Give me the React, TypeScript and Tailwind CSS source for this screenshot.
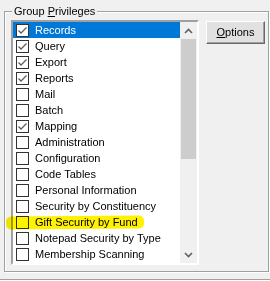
import React from 'react';

const items: { label: string; checked: boolean }[] = [
  { label: 'Records', checked: true },
  { label: 'Query', checked: true },
  { label: 'Export', checked: true },
  { label: 'Reports', checked: true },
  { label: 'Mail', checked: false },
  { label: 'Batch', checked: false },
  { label: 'Mapping', checked: true },
  { label: 'Administration', checked: false },
  { label: 'Configuration', checked: false },
  { label: 'Code Tables', checked: false },
  { label: 'Personal Information', checked: false },
  { label: 'Security by Constituency', checked: false },
  { label: 'Gift Security by Fund', checked: false },
  { label: 'Notepad Security by Type', checked: false },
  { label: 'Membership Scanning', checked: false },
];

const CheckBox = ({ checked }: { checked: boolean }) => (
  <span className="w-[13px] h-[13px] shrink-0 border border-[#333333] bg-white flex items-center justify-center">
    {checked && (
      <svg width="11" height="11" viewBox="0 0 11 11">
        <path d="M1.5 5.5 L4 8 L9.5 2.5" fill="none" stroke="#5f5f5f" strokeWidth="1.3" />
      </svg>
    )}
  </span>
);

const Chevron = ({ up }: { up: boolean }) => (
  <svg width="9" height="6" viewBox="0 0 9 6">
    <path d={up ? 'M1 5 L4.5 1.5 L8 5' : 'M1 1 L4.5 4.5 L8 1'} fill="none" stroke="#606060" strokeWidth="1.6" />
  </svg>
);

export default function App() {
  return (
    <div className="relative w-[270px] h-[281px] bg-[#f0f0f0] overflow-hidden text-[11px] text-black" style={{ fontFamily: '"Liberation Sans", Arial, sans-serif' }}>
      <div className="pt-[11px] pl-[4px]">
        {/* group box */}
        <div className="relative w-[265px] h-[261px] border border-[#a0a0a0] shadow-[inset_1px_1px_0_#fff,1px_1px_0_#fff]">
          <span className="absolute left-[7px] top-[-8px] px-[2px] bg-[#f0f0f0] leading-[14px]">
            Group <span className="underline">P</span>rivileges
          </span>
          <div className="flex pl-[6px] pt-[8px]">
            {/* list box */}
            <div className="w-[188px] h-[245px] border-[2px] border-t-[#a0a0a0] border-l-[#a0a0a0] border-b-white border-r-white">
              <div className="flex h-full bg-white">
                <ul className="flex-1">
                  {items.map((it, i) => (
                    <li
                      key={it.label}
                      className={
                        'h-[16px] flex items-center pl-[3px] whitespace-nowrap overflow-hidden ' +
                        (i === 0 ? 'bg-[#0078d7] text-white' : '')
                      }
                    >
                      <CheckBox checked={it.checked} />
                      <span className="ml-[6px] leading-[16px]">{it.label}</span>
                    </li>
                  ))}
                </ul>
                <div className="w-[17px] flex flex-col bg-[#f0f0f0]">
                  <div className="h-[17px] flex items-center justify-center">
                    <Chevron up />
                  </div>
                  <div className="h-[120px] mx-[1px] bg-[#cdcdcd]" />
                  <div className="flex-1" />
                  <div className="h-[17px] flex items-center justify-center">
                    <Chevron up={false} />
                  </div>
                </div>
              </div>
            </div>
            <button className="ml-[7px] mt-[1px] w-[59px] h-[23px] bg-[#e1e1e1] border border-t-white border-l-white border-b-[#696969] border-r-[#696969] shadow-[inset_-1px_-1px_0_#a0a0a0] flex items-center justify-center">
              <span><span className="underline">O</span>ptions</span>
            </button>
          </div>
          {/* highlighter mark */}
          <div className="absolute left-[1px] top-[204px] w-[138px] h-[13px] rounded-[5px] bg-[#fff200] mix-blend-multiply -rotate-[0.5deg]" />
        </div>
      </div>
      <div className="absolute left-0 right-0 top-[279px] h-[2px] border-t border-[#a0a0a0] bg-[#f0f0f0] shadow-[inset_0_1px_0_#fff]" />
    </div>
  );
}
